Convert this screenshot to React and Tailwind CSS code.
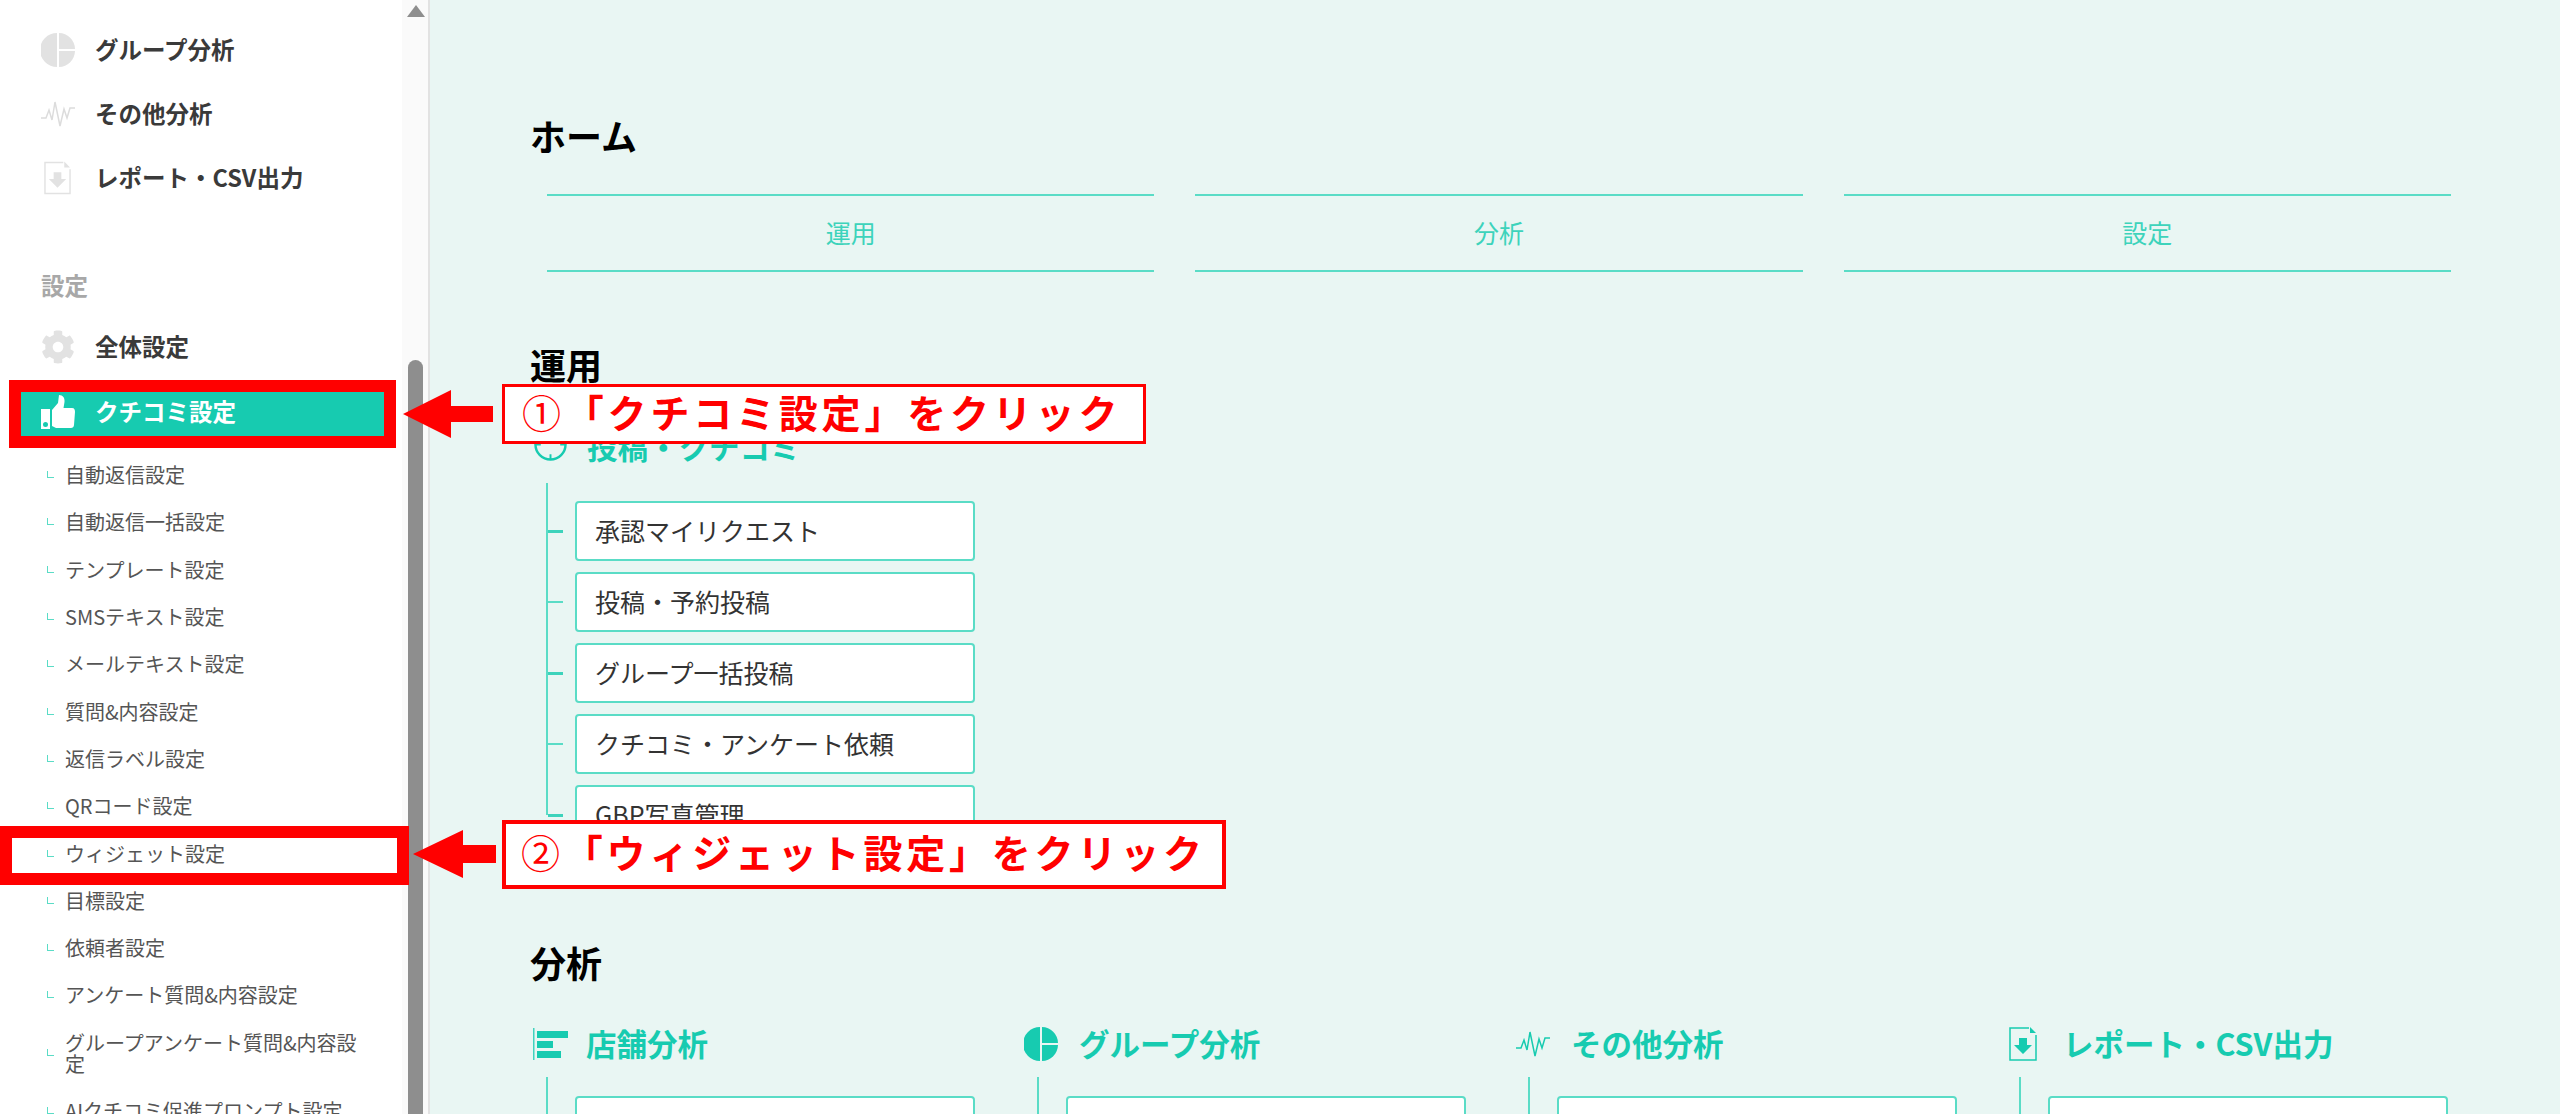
import React from 'react';
import { FaCog } from 'react-icons/fa';

const subItems = [
  '自動返信設定',
  '自動返信一括設定',
  'テンプレート設定',
  'SMSテキスト設定',
  'メールテキスト設定',
  '質問&内容設定',
  '返信ラベル設定',
  'QRコード設定',
  'ウィジェット設定',
  '目標設定',
  '依頼者設定',
  'アンケート質問&内容設定',
  'グループアンケート質問&内容設定',
  'AIクチコミ促進プロンプト設定',
];

const PieIcon = ({ className }) => (
  <svg viewBox="0 0 34 34" className={className} fill="currentColor">
    <path d="M16 0A17 17 0 0 0 16 34Z" />
    <path d="M18 0A16.5 16.5 0 0 1 34 16H18Z" />
    <path d="M18 18H34A16.5 16.5 0 0 1 18 34Z" />
  </svg>
);

const PulseIcon = ({ className }) => (
  <svg viewBox="0 0 34 28" className={className} fill="none" stroke="currentColor" strokeWidth="1.5">
    <path d="M0 18H5L8 10L11 20L14 2L19 26L23 9L26 18L29 8L34 8" />
  </svg>
);

const DocIcon = ({ className }) => (
  <svg viewBox="0 0 28 34" className={className}>
    <path d="M20 1H1V33H27V8" fill="none" stroke="currentColor" strokeWidth="1.5" />
    <path d="M21 0L27 6H21Z" fill="currentColor" />
    <path d="M10 11H18V18H23L14 27L5 18H10Z" fill="currentColor" />
  </svg>
);

const ThumbIcon = ({ className }) => (
  <svg viewBox="0 0 34 34" className={className} fill="currentColor">
    <path fillRule="evenodd" d="M0 14H9V34H0ZM4.5 27A2.5 2.5 0 1 0 4.5 32A2.5 2.5 0 1 0 4.5 27Z" />
    <path d="M11 15L17 8L18 0C22 0 24 3 23.5 7L22.5 13H31C33.5 13 34 15 34 17L33 30C33 32 31.5 33 30 33H15L11 31Z" />
  </svg>
);

const BarsIcon = ({ className }) => (
  <svg viewBox="0 0 35 32" className={className} fill="currentColor">
    <rect x="0" y="0" width="1.5" height="32" opacity="0.8" />
    <rect x="4" y="3" width="31" height="7" />
    <rect x="4" y="13" width="16" height="7" />
    <rect x="4" y="23" width="24" height="7" />
  </svg>
);

const ClockIcon = ({ className }) => (
  <svg viewBox="0 0 34 34" className={className} fill="none" stroke="currentColor" strokeWidth="2.5">
    <circle cx="17" cy="17" r="15.5" />
    <path d="M17 27V33M1 17H7M27 17H33M17 1V7" strokeWidth="2" />
  </svg>
);

const Card = ({ label }) => (
  <div className="flex h-[60px] w-[400px] shrink-0 items-center rounded-[4px] border-2 border-[#5adcc6] bg-white pl-[18px] text-[25px] text-[#333]">
    {label}
  </div>
);

const Tick = ({ thick }) => (
  <span className={thick ? 'h-[3px] w-[15px] bg-[#3dd3bb]' : 'h-[2px] w-[15px] bg-[#5adcc6]'} />
);

const analysis = [
  { title: '店舗分析', Icon: BarsIcon, box: 'w-[56px]', icon: 'ml-[3px] h-[32px] w-[35px]' },
  { title: 'グループ分析', Icon: PieIcon, box: 'w-[58px]', icon: 'ml-[3px] h-[34px] w-[34px]' },
  { title: 'その他分析', Icon: PulseIcon, box: 'w-[59px]', icon: 'ml-[4px] h-[34px] w-[34px]' },
  { title: 'レポート・CSV出力', Icon: DocIcon, box: 'w-[60px]', icon: 'ml-[6px] h-[34px] w-[28px]' },
];

const Sidebar = () => (
  <aside className="flex h-full w-[430px] shrink-0 border-r-2 border-[#e2e2e2] bg-white">
    <nav className="w-[402px] shrink-0 pt-[18px]">
      <div className="flex h-[64px] items-center text-[23.5px] font-bold text-[#3a3a3a]">
        <div className="w-[95px] pl-[41px]"><PieIcon className="h-[34px] w-[34px] text-[#e2e2e2]" /></div>
        グループ分析
      </div>
      <div className="flex h-[64px] items-center text-[23.5px] font-bold text-[#3a3a3a]">
        <div className="w-[95px] pl-[41px]"><PulseIcon className="h-[30px] w-[34px] text-[#dcdcdc]" /></div>
        その他分析
      </div>
      <div className="flex h-[64px] items-center text-[23.5px] font-bold text-[#3a3a3a]">
        <div className="w-[95px] pl-[44px]"><DocIcon className="h-[34px] w-[27px] text-[#e2e2e2]" /></div>
        レポート・CSV出力
      </div>
      <div className="mt-[56px] flex h-[40px] items-center pl-[41px] text-[23.5px] font-bold text-[#a8a8a8]">設定</div>
      <div className="mt-[9px] flex h-[64px] items-center text-[23.5px] font-bold text-[#3a3a3a]">
        <div className="w-[95px] pl-[41px]"><FaCog className="h-[34px] w-[34px] text-[#e2e2e2]" /></div>
        全体設定
      </div>
      <div className="mx-[12px] mt-[6px] flex h-[55px] items-center bg-[#17cbb0] pb-[2px] text-[23.5px] font-bold text-white">
        <div className="w-[83px] pl-[29px]"><ThumbIcon className="h-[34px] w-[34px]" /></div>
        クチコミ設定
      </div>
      <ul className="mt-[11px]">
        {subItems.map((item) => (
          <li key={item} className="flex min-h-[47.3px] items-center py-[13px] pl-[47px] text-[20px] leading-[21px] text-[#555]">
            <span className="mr-[11px] h-[7px] w-[7px] shrink-0 border-b-[1.5px] border-l-[1.5px] border-[#5adcc6]" />
            <span className="w-[305px]">{item}</span>
          </li>
        ))}
      </ul>
    </nav>
    <div className="w-[26px] bg-[#fafafa] pl-[5px] pt-[5px]">
      <svg viewBox="0 0 18 12" className="h-[12px] w-[18px] text-[#8e8e8e]" fill="currentColor">
        <path d="M9 0L18 12H0Z" />
      </svg>
      <div className="ml-[1px] mt-[343px] h-[800px] w-[15px] rounded-full bg-[#8e8e8e]" />
    </div>
  </aside>
);

const Main = () => (
  <main className="h-full flex-1 bg-[#e9f6f3] pl-[100px] pt-[110px]">
    <h1 className="flex h-[50px] items-center text-[36px] font-bold text-black">ホーム</h1>
    <div className="ml-[17px] mt-[34px] grid w-[1904px] grid-cols-3 gap-[41px]">
      {['運用', '分析', '設定'].map((tab) => (
        <div key={tab} className="flex h-[78px] items-center justify-center border-y-2 border-[#5adcc6] text-[25px] text-[#3dd3bb]">
          {tab}
        </div>
      ))}
    </div>

    <h2 className="mt-[67px] flex h-[50px] items-center text-[36px] font-bold text-black">運用</h2>
    <div className="mt-[33px] flex h-[50px] items-center text-[30.5px] font-bold text-[#17cbb0]">
      <div className="w-[57px] pl-[4px]"><ClockIcon className="-mt-[6px] h-[33px] w-[33px]" /></div>
      投稿・クチコミ
    </div>
    <div className="ml-[16px] mt-[11px] flex">
      <div className="h-[332px] w-[2px] bg-[#5adcc6]" />
      <div className="flex flex-col gap-[11px] pt-[18px]">
        {['承認マイリクエスト', '投稿・予約投稿', 'グループ一括投稿', 'クチコミ・アンケート依頼', 'GBP写真管理'].map((label, i) => (
          <div key={label} className="flex items-center">
            <Tick thick={i % 2 === 0} />
            <div className="ml-[12px]"><Card label={label} /></div>
          </div>
        ))}
      </div>
    </div>

    <h2 className="mt-[92px] flex h-[50px] items-center text-[36px] font-bold text-black">分析</h2>
    <div className="mt-[32px] flex">
      {analysis.map(({ title, Icon, box, icon }) => (
        <div key={title} className="w-[491px] shrink-0">
          <div className="flex h-[50px] items-center text-[30.5px] font-bold text-[#17cbb0]">
            <div className={box}><Icon className={icon} /></div>
            {title}
          </div>
          <div className="ml-[16px] mt-[8px] flex">
            <div className="h-[200px] w-[2px] bg-[#5adcc6]" />
            <div className="ml-[27px] pt-[19px]"><Card label="" /></div>
          </div>
        </div>
      ))}
    </div>
  </main>
);

// 赤枠と矢印は画面の上に重ねる注釈
const Notes = () => (
  <>
    <div className="absolute left-[9px] top-[380px] h-[68px] w-[387px] border-[12px] border-[#ff0000]" />
    <div className="absolute left-0 top-[826px] h-[59px] w-[409px] border-[12px] border-[#ff0000]" />

    <svg viewBox="0 0 90 48" className="absolute left-[403px] top-[390px] h-[48px] w-[90px] text-[#ff0000]" fill="currentColor">
      <path d="M0 24L48 0V16H90V32H48V48Z" />
    </svg>
    <svg viewBox="0 0 83 48" className="absolute left-[413px] top-[830px] h-[48px] w-[83px] text-[#ff0000]" fill="currentColor">
      <path d="M0 24L50 0V15H83V33H50V48Z" />
    </svg>

    <div className="absolute left-[502px] top-[384px] flex h-[60px] w-[644px] items-center whitespace-nowrap border-[3px] border-[#ff0000] bg-white pb-[6px] pl-[17px] text-[39px] font-bold tracking-[3.8px] text-[#ff0000]">
      <span className="font-normal">①</span>「クチコミ設定」をクリック
    </div>
    <div className="absolute left-[502px] top-[820px] flex h-[69px] w-[724px] items-center whitespace-nowrap border-[4px] border-[#ff0000] bg-white pb-[6px] pl-[15px] text-[39px] font-bold tracking-[3.8px] text-[#ff0000]">
      <span className="font-normal">②</span>「ウィジェット設定」をクリック
    </div>
  </>
);

const App = () => (
  <div className="relative flex h-screen w-full overflow-hidden font-['Noto_Sans_CJK_JP',sans-serif]">
    <Sidebar />
    <Main />
    <Notes />
  </div>
);

export default App;
